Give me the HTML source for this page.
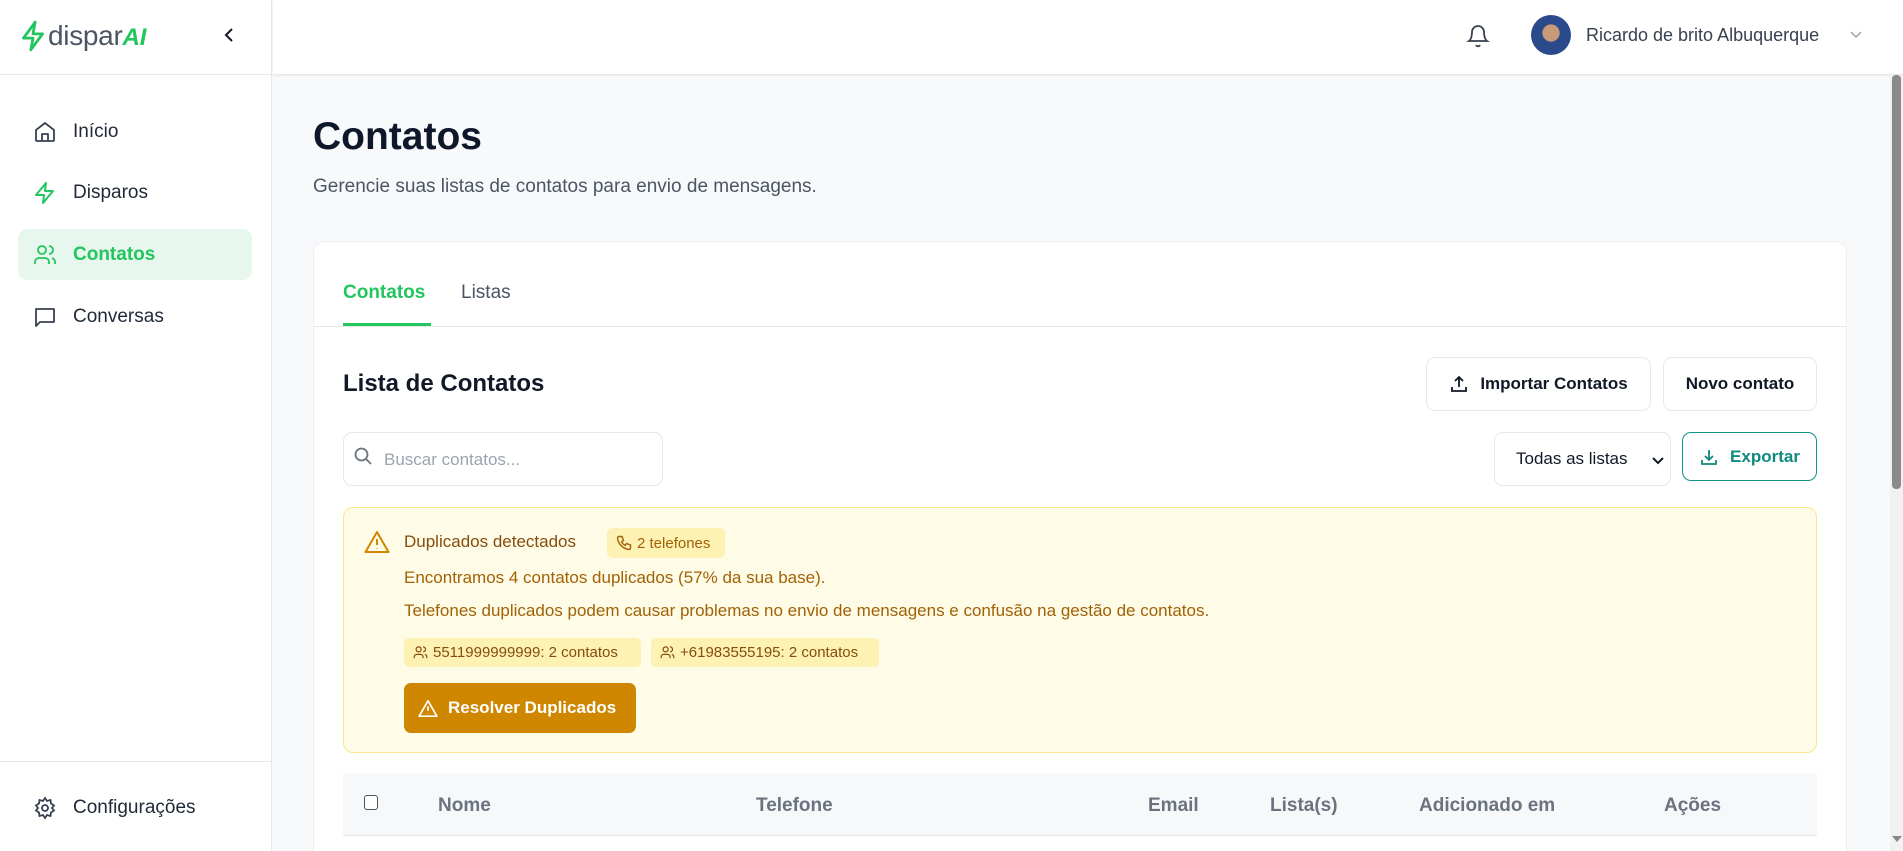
<!DOCTYPE html>
<html style="overflow:hidden;width:1903px;height:851px"><head><meta charset="utf-8"><style>
*{box-sizing:border-box;margin:0;padding:0}
body{width:1903px;height:851px;overflow:hidden;font-family:"Liberation Sans",sans-serif;background:#f8f9fb;position:relative;color:#111827}
.a{position:absolute}
svg{display:block}
.nav{position:absolute;left:18px;width:234px;height:51px;display:flex;align-items:center;padding-left:15px;font-size:19px;color:#1f2937;border-radius:9px}
.nav svg{margin-right:16px}
.btn{position:absolute;background:#fff;border:1px solid #e5e7eb;border-radius:9px;display:flex;align-items:center;justify-content:center;font-size:17px;font-weight:bold;color:#111827}
.th{position:absolute;top:795px;font-size:19px;font-weight:bold;color:#6b7280}
</style></head><body>
<!-- sidebar -->
<div class="a" style="left:0;top:0;width:272px;height:851px;background:#fff;border-right:1px solid #e5e7eb"></div>
<div class="a" style="left:0;top:74px;width:272px;height:1px;background:#e5e7eb"></div>
<div class="a" style="left:20px;top:20px;display:flex;align-items:center">
<svg width="26" height="32" viewBox="0 0 24 30" fill="none" stroke="#22c55e" stroke-width="2.6" stroke-linejoin="round"><path d="M14 2 3 17h9l-2 11 11-15h-9z"/></svg>
<span style="font-size:28px;color:#4b5563;margin-left:2px;letter-spacing:-0.3px">dispar</span><span style="font-size:24px;color:#22c55e;font-weight:bold;font-style:italic;margin-top:3px">AI</span></div>
<svg class="a" style="left:222px;top:27px" width="14" height="16" viewBox="0 0 14 16" fill="none" stroke="#111827" stroke-width="2"><path d="M10 2 4 8l6 6"/></svg>
<div class="nav" style="top:106px"><svg width="24" height="24" viewBox="0 0 24 24" fill="none" stroke="#374151" stroke-width="1.8" stroke-linejoin="round"><path d="M3 10 12 3l9 7v10a1 1 0 0 1-1 1H4a1 1 0 0 1-1-1z"/><path d="M9 21v-7h6v7"/></svg>Início</div>
<div class="nav" style="top:167px"><svg width="24" height="24" viewBox="0 0 24 24" fill="none" stroke="#22c55e" stroke-width="2" stroke-linejoin="round"><path d="M13 2 3 14h8l-1 8 10-12h-8z"/></svg>Disparos</div>
<div class="nav" style="top:229px;background:#e8f7ed;color:#22c55e;font-weight:bold"><svg width="24" height="24" viewBox="0 0 24 24" fill="none" stroke="#22c55e" stroke-width="1.8"><circle cx="9" cy="7" r="4"/><path d="M2 21v-2a4 4 0 0 1 4-4h6a4 4 0 0 1 4 4v2M16 3a4 4 0 0 1 0 8M22 21v-2a4 4 0 0 0-3-3.9"/></svg>Contatos</div>
<div class="nav" style="top:291px"><svg width="24" height="24" viewBox="0 0 24 24" fill="none" stroke="#374151" stroke-width="1.8" stroke-linejoin="round"><path d="M3 4h18v13H7l-4 4z"/></svg>Conversas</div>
<div class="a" style="left:0;top:761px;width:272px;height:1px;background:#e5e7eb"></div>
<div class="nav" style="top:782px"><svg width="24" height="24" viewBox="0 0 24 24" fill="none" stroke="#374151" stroke-width="1.8"><circle cx="12" cy="12" r="3"/><path d="M12 2l2 3 3.5-1 .5 3.5 3 2-2 2.5 2 2.5-3 2-.5 3.5L14 19l-2 3-2-3-3.5 1L6 16.5l-3-2L5 12 3 9.5l3-2L6.5 4 10 5z"/></svg>Configurações</div>
<!-- header -->
<div class="a" style="left:273px;top:0;width:1630px;height:75px;background:#fff;border-bottom:1px solid #e5e7eb;box-shadow:0 1px 3px rgba(0,0,0,.05)"></div>
<svg class="a" style="left:1466px;top:22px" width="24" height="26" viewBox="0 0 24 26" fill="none" stroke="#374151" stroke-width="1.8"><path d="M6 10a6 6 0 0 1 12 0c0 7 3 9 3 9H3s3-2 3-9M10 23a2.2 2.2 0 0 0 4 0"/></svg>
<div class="a" style="left:1531px;top:15px;width:40px;height:40px;border-radius:50%;background:radial-gradient(circle at 50% 45%,#c89a7a 0 28%,#2b4a8c 30% 100%)"></div>
<div class="a" style="left:1586px;top:25px;font-size:18px;color:#374151">Ricardo de brito Albuquerque</div>
<svg class="a" style="left:1849px;top:30px" width="14" height="10" viewBox="0 0 14 10" fill="none" stroke="#9ca3af" stroke-width="1.5"><path d="M2 2l5 5 5-5"/></svg>
<!-- scrollbar -->
<div class="a" style="left:1890px;top:75px;width:13px;height:776px;background:#f1f1f1"></div>
<div class="a" style="left:1892px;top:75px;width:9px;height:414px;background:#8a8a8a;border-radius:4px"></div>
<div class="a" style="left:1892px;top:836px;width:0;height:0;border-left:5px solid transparent;border-right:5px solid transparent;border-top:6px solid #888"></div>
<!-- title -->
<div class="a" style="left:313px;top:115px;font-size:39px;font-weight:bold;color:#0f172a">Contatos</div>
<div class="a" style="left:313px;top:176px;font-size:19px;color:#4b5563">Gerencie suas listas de contatos para envio de mensagens.</div>
<!-- card -->
<div class="a" style="left:313px;top:241px;width:1534px;height:620px;background:#fff;border:1px solid #eceef1;border-radius:11px"></div>
<div class="a" style="left:343px;top:282px;font-size:19px;font-weight:bold;color:#22c55e">Contatos</div>
<div class="a" style="left:343px;top:323px;width:88px;height:3px;background:#22c55e"></div>
<div class="a" style="left:461px;top:282px;font-size:19px;color:#4b5563">Listas</div>
<div class="a" style="left:314px;top:326px;width:1532px;height:1px;background:#e5e7eb"></div>
<div class="a" style="left:343px;top:370px;font-size:24px;font-weight:bold;color:#111827">Lista de Contatos</div>
<div class="btn" style="left:1426px;top:357px;width:225px;height:54px"><svg width="20" height="20" viewBox="0 0 20 20" fill="none" stroke="#111827" stroke-width="1.8" style="margin-right:11px"><path d="M10 13V3M6 7l4-4 4 4M3 13v4h14v-4"/></svg>Importar Contatos</div>
<div class="btn" style="left:1663px;top:357px;width:154px;height:54px">Novo contato</div>
<div class="a" style="left:343px;top:432px;width:320px;height:54px;border:1px solid #e5e7eb;border-radius:9px;background:#fff"></div>
<svg class="a" style="left:353px;top:446px" width="20" height="20" viewBox="0 0 20 20" fill="none" stroke="#6b7280" stroke-width="1.8"><circle cx="8.5" cy="8.5" r="6"/><path d="M13 13l5 5"/></svg>
<div class="a" style="left:384px;top:450px;font-size:17px;color:#9ca3af">Buscar contatos...</div>
<div class="btn" style="left:1494px;top:432px;width:177px;height:54px;font-weight:normal;justify-content:flex-start;padding-left:21px">Todas as listas<svg width="12" height="8" viewBox="0 0 12 8" fill="none" stroke="#111827" stroke-width="2" style="position:absolute;right:6px;top:24px"><path d="M1 1l5 5 5-5"/></svg></div>
<div class="btn" style="left:1682px;top:432px;width:135px;height:49px;border:1.5px solid #0f9488;color:#0f8a7e"><svg width="20" height="20" viewBox="0 0 20 20" fill="none" stroke="#0f8a7e" stroke-width="1.8" style="margin-right:11px"><path d="M10 3v10M6 9l4 4 4-4M3 13v4h14v-4"/></svg>Exportar</div>
<!-- alert -->
<div class="a" style="left:343px;top:507px;width:1474px;height:246px;background:#fefbe6;border:1px solid #fbe58c;border-radius:10px"></div>
<svg class="a" style="left:364px;top:530px" width="26" height="24" viewBox="0 0 26 24" fill="none" stroke="#d08700" stroke-width="2" stroke-linejoin="round"><path d="M13 2 1.5 22h23z"/><path d="M13 9v6M13 18v.5"/></svg>
<div class="a" style="left:404px;top:532px;font-size:17px;color:#854d0e;font-weight:500">Duplicados detectados</div>
<div class="a" style="left:607px;top:528px;width:118px;height:30px;background:#fdf2b4;border-radius:6px;display:flex;align-items:center;padding-left:9px;font-size:15px;color:#a16207"><svg width="16" height="16" viewBox="0 0 16 16" fill="none" stroke="#a16207" stroke-width="1.4" style="margin-right:5px"><path d="M3 1.5h3l1.5 4-2 1.3a9 9 0 0 0 3.7 3.7l1.3-2 4 1.5v3a1.5 1.5 0 0 1-1.5 1.5A13 13 0 0 1 1.5 3 1.5 1.5 0 0 1 3 1.5z"/></svg>2 telefones</div>
<div class="a" style="left:404px;top:568px;font-size:17px;color:#a16207">Encontramos 4 contatos duplicados (57% da sua base).</div>
<div class="a" style="left:404px;top:601px;font-size:17px;color:#a16207">Telefones duplicados podem causar problemas no envio de mensagens e confusão na gestão de contatos.</div>
<div class="a" style="left:404px;top:638px;width:237px;height:29px;background:#fdf2b4;border-radius:5px;display:flex;align-items:center;padding-left:9px;font-size:15px;color:#854d0e"><svg width="15" height="15" viewBox="0 0 24 24" fill="none" stroke="#854d0e" stroke-width="2" style="margin-right:5px"><circle cx="9" cy="7" r="4"/><path d="M2 21v-2a4 4 0 0 1 4-4h6a4 4 0 0 1 4 4v2M16 3a4 4 0 0 1 0 8M22 21v-2a4 4 0 0 0-3-3.9"/></svg>5511999999999: 2 contatos</div>
<div class="a" style="left:651px;top:638px;width:228px;height:29px;background:#fdf2b4;border-radius:5px;display:flex;align-items:center;padding-left:9px;font-size:15px;color:#854d0e"><svg width="15" height="15" viewBox="0 0 24 24" fill="none" stroke="#854d0e" stroke-width="2" style="margin-right:5px"><circle cx="9" cy="7" r="4"/><path d="M2 21v-2a4 4 0 0 1 4-4h6a4 4 0 0 1 4 4v2M16 3a4 4 0 0 1 0 8M22 21v-2a4 4 0 0 0-3-3.9"/></svg>+61983555195: 2 contatos</div>
<div class="a" style="left:404px;top:683px;width:232px;height:50px;background:#d08700;border-radius:7px;display:flex;align-items:center;padding-left:14px;font-size:17px;font-weight:bold;color:#fff"><svg width="20" height="19" viewBox="0 0 26 24" fill="none" stroke="#fff" stroke-width="2.2" stroke-linejoin="round" style="margin-right:10px"><path d="M13 2 1.5 22h23z"/><path d="M13 9v6M13 18v.5"/></svg>Resolver Duplicados</div>
<!-- table header -->
<div class="a" style="left:343px;top:773px;width:1474px;height:63px;background:#f7f8fa;border-bottom:1px solid #e5e7eb"></div>
<div class="a" style="left:364px;top:795px;width:14px;height:15px;border:1.5px solid #4b5563;border-radius:3px;background:#fff"></div>
<div class="th" style="left:438px">Nome</div>
<div class="th" style="left:756px">Telefone</div>
<div class="th" style="left:1148px">Email</div>
<div class="th" style="left:1270px">Lista(s)</div>
<div class="th" style="left:1419px">Adicionado em</div>
<div class="th" style="left:1664px">Ações</div>
</body></html>
